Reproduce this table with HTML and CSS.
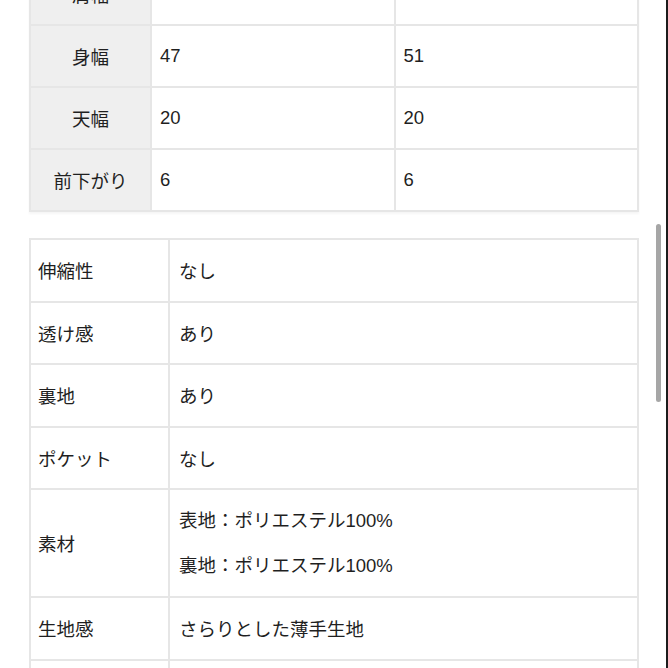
FILE: index.html
```html
<!DOCTYPE html>
<html lang="ja">
<head>
<meta charset="utf-8">
<link rel="stylesheet" href="styles.css">
</head>
<body>
<div class="page">
  <table class="size-table">
    <colgroup><col class="c-head"><col class="c-val"><col class="c-val"></colgroup>
    <tr><th>肩幅</th><td>38</td><td>40</td></tr>
    <tr><th>身幅</th><td>47</td><td>51</td></tr>
    <tr><th>天幅</th><td>20</td><td>20</td></tr>
    <tr><th>前下がり</th><td>6</td><td>6</td></tr>
  </table>

  <table class="spec-table">
    <colgroup><col class="c-label"><col></colgroup>
    <tr><td class="label">伸縮性</td><td>なし</td></tr>
    <tr><td class="label">透け感</td><td>あり</td></tr>
    <tr><td class="label">裏地</td><td>あり</td></tr>
    <tr><td class="label">ポケット</td><td>なし</td></tr>
    <tr class="tall"><td class="label">素材</td><td><div class="lines"><span>表地：ポリエステル100%</span><span>裏地：ポリエステル100%</span></div></td></tr>
    <tr><td class="label">生地感</td><td>さらりとした薄手生地</td></tr>
    <tr><td class="label">&nbsp;</td><td>&nbsp;</td></tr>
  </table>
  <div class="scrollbar"></div>
</div>
</body>
</html>
```

FILE: styles.css
```css
html, body {
  margin: 0;
  padding: 0;
  background: #fff;
}
body {
  font-family: "Liberation Sans", "Noto Sans CJK JP", sans-serif;
  font-size: 18.5px;
  color: #1f1f1f;
  overflow: hidden;
  height: 668px;
}
.page {
  position: relative;
  height: 668px;
  border-right: 2px solid #1c1c1c;
  box-sizing: border-box;
  padding: 0 27px 0 29px;
  overflow: hidden;
}
table {
  width: 610px;
  border-collapse: collapse;
  table-layout: fixed;
}
th, td {
  border: 2px solid #e6e6e6;
  padding: 0 8px;
  text-align: left;
  vertical-align: middle;
  font-weight: normal;
  height: 60px;
}
.size-table {
  margin-top: -38px;
  box-shadow: 0 2px 2px rgba(0,0,0,0.04);
}
.c-head { width: 121px; }
.size-table th {
  background: #efefef;
  text-align: center;
  padding: 0;
}
.spec-table {
  margin-top: 26px;
}
.c-label { width: 139px; }
.spec-table td { padding-left: 9px; height: 60.5px; }
.spec-table td.label { padding-left: 7px; }
.spec-table tr.tall td { height: 106px; }
.lines {
  display: flex;
  flex-direction: column;
  gap: 18px;
  line-height: 27px;
}
.scrollbar {
  position: absolute;
  left: 656px;
  top: 224px;
  width: 5px;
  height: 178px;
  border-radius: 3px;
  background: #a6a6a6;
}
```
